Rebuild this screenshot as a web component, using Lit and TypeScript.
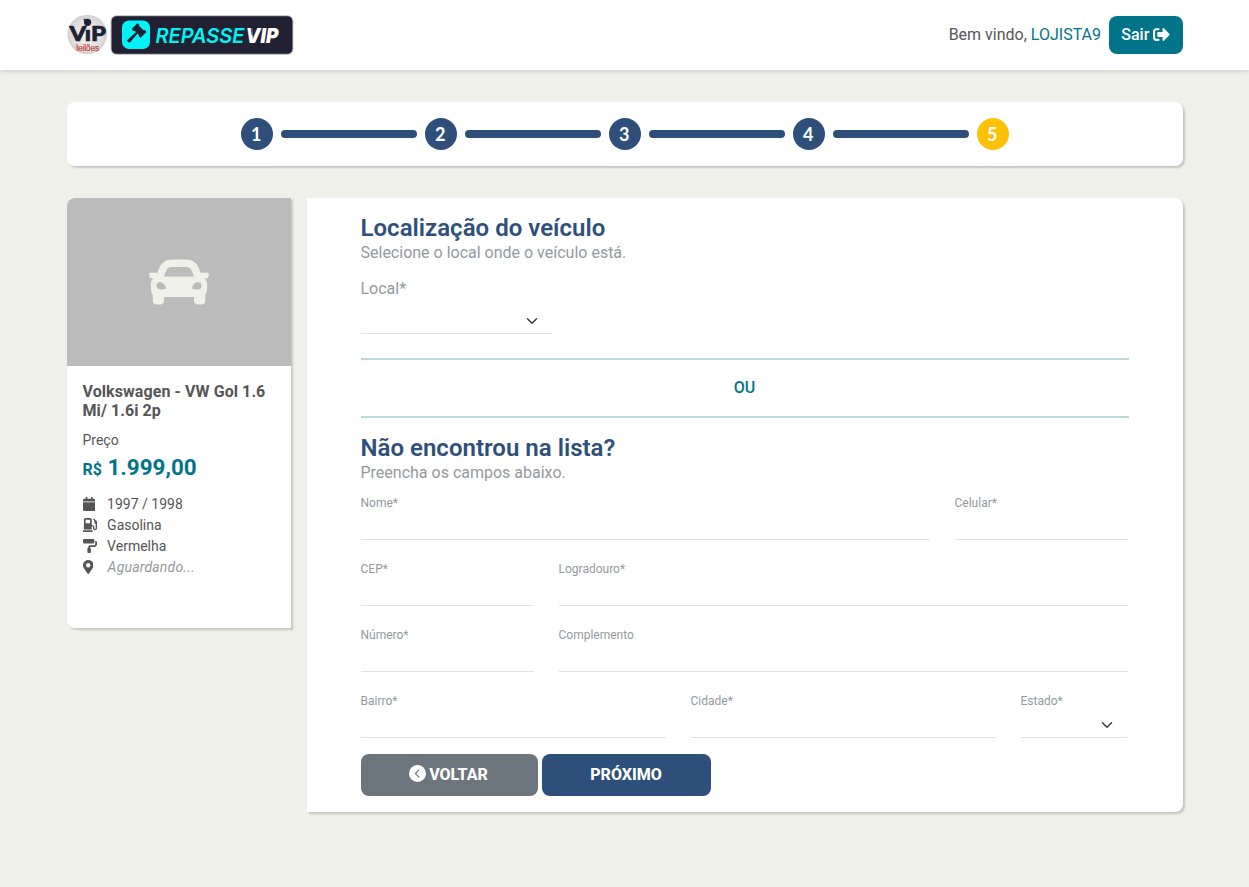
import { LitElement, html, svg, css } from "lit";
import { customElement, property } from "lit/decorators.js";

const ICONS: Record<string, { box: string; d: string }> = {
  car: { box: "0 0 512 512", d: "M499.99 176h-59.87l-16.64-41.6C406.38 91.63 365.57 64 319.5 64h-127c-46.06 0-86.88 27.63-103.99 70.4L71.87 176H12.01C4.2 176-1.53 183.34.37 190.91l6 24C7.7 220.25 12.5 224 18.01 224h20.07C24.65 235.73 16 252.78 16 272v48c0 16.12 6.16 30.67 16 41.93V416c0 17.67 14.33 32 32 32h32c17.67 0 32-14.33 32-32v-32h256v32c0 17.67 14.33 32 32 32h32c17.67 0 32-14.33 32-32v-54.07c9.84-11.25 16-25.8 16-41.93v-48c0-19.22-8.65-36.27-22.07-48H494c5.51 0 10.31-3.75 11.64-9.09l6-24c1.89-7.57-3.84-14.91-11.65-14.91zm-352.06-17.83c7.29-18.22 24.94-30.17 44.57-30.17h127c19.63 0 37.28 11.95 44.57 30.17L384 208H128l19.93-49.83zM96 319.8c-19.2 0-32-12.76-32-31.9S76.8 256 96 256s48 28.71 48 47.85-28.8 15.95-48 15.95zm320 0c-19.2 0-48 3.19-48-15.95S396.8 256 416 256s32 12.76 32 31.9-12.8 31.9-32 31.9z" },
  calendar: { box: "0 0 448 512", d: "M12 192h424c6.6 0 12 5.4 12 12v260c0 26.5-21.5 48-48 48H48c-26.5 0-48-21.5-48-48V204c0-6.6 5.4-12 12-12zm436-44v-36c0-26.5-21.5-48-48-48h-48V12c0-6.6-5.4-12-12-12h-40c-6.6 0-12 5.4-12 12v52H160V12c0-6.6-5.4-12-12-12h-40c-6.6 0-12 5.4-12 12v52H48C21.5 64 0 85.5 0 112v36c0 6.6 5.4 12 12 12h424c6.6 0 12-5.4 12-12z" },
  pump: { box: "0 0 512 512", d: "M336 448H16c-8.8 0-16 7.2-16 16v32c0 8.8 7.2 16 16 16h320c8.8 0 16-7.2 16-16v-32c0-8.8-7.2-16-16-16zm157.2-340.7l-81-81c-6.2-6.2-16.4-6.2-22.6 0l-11.3 11.3c-6.2 6.2-6.2 16.4 0 22.6L416 97.9V160c0 28.1 20.9 51.3 48 55.2V376c0 13.2-10.8 24-24 24s-24-10.8-24-24v-32c0-48.6-39.4-88-88-88h-8V64c0-35.3-28.7-64-64-64H96C60.7 0 32 28.7 32 64v352h288V304h8c22.1 0 40 17.9 40 40v27.8c0 37.7 27 72 64.5 75.9 43 4.3 79.5-29.5 79.5-71.7V152.6c0-17-6.8-33.3-18.8-45.3zM256 192H96V64h160v128z" },
  roller: { box: "0 0 512 512", d: "M416 128V32c0-17.67-14.33-32-32-32H32C14.33 0 0 14.33 0 32v96c0 17.67 14.33 32 32 32h352c17.67 0 32-14.33 32-32zm32-64v128c0 17.67-14.33 32-32 32H256c-35.35 0-64 28.65-64 64v32c-17.67 0-32 14.33-32 32v128c0 17.67 14.33 32 32 32h64c17.67 0 32-14.33 32-32V352c0-17.67-14.33-32-32-32v-32h160c53.02 0 96-42.98 96-96v-64c0-35.35-28.65-64-64-64z" },
  marker: { box: "0 0 384 512", d: "M172.268 501.67C26.97 291.031 0 269.413 0 192 0 85.961 85.961 0 192 0s192 85.961 192 192c0 77.413-26.97 99.031-172.268 309.67-9.535 13.774-29.93 13.773-39.464 0zM192 272c44.183 0 80-35.817 80-80s-35.817-80-80-80-80 35.817-80 80 35.817 80 80 80z" },
  signout: { box: "0 0 512 512", d: "M497 273L329 441c-15 15-41 4.5-41-17v-96H152c-13.3 0-24-10.7-24-24v-96c0-13.3 10.7-24 24-24h136V88c0-21.4 25.9-32 41-17l168 168c9.3 9.4 9.3 24.6 0 34zM192 436v-40c0-6.6-5.4-12-12-12H96c-17.7 0-32-14.3-32-32V160c0-17.7 14.3-32 32-32h84c6.6 0 12-5.4 12-12V76c0-6.6-5.4-12-12-12H96c-53 0-96 43-96 96v192c0 53 43 96 96 96h84c6.6 0 12-5.4 12-12z" },
};

const icon = (name: string) => {
  const i = ICONS[name];
  return html`<svg class="icon ${name}" viewBox=${i.box}>${svg`<path fill="currentColor" d=${i.d}></path>`}</svg>`;
};

@customElement("form-field")
class FormField extends LitElement {
  @property() label = "";
  @property({ type: Boolean }) select = false;
  @property({ type: Boolean }) large = false;

  static styles = css`
    :host { display: block; }
    .label { height: 18px; font-size: 12px; line-height: 18px; color: #939a9e; }
    .control {
      height: 28px; box-sizing: border-box; border-bottom: 1px solid #dee2e6; border-radius: 6px 6px 0 0;
      display: flex; justify-content: flex-end; align-items: center; padding-right: 12px;
    }
    .large .label { height: 24px; font-size: 16px; line-height: 24px; }
    .large .control { height: 33px; padding-top: 9px; }
    .small .control { padding-top: 3px; }
    .chevron { width: 16px; height: 12px; }
  `;

  render() {
    return html`<div class=${this.large ? "large" : "small"}>
      <div class="label">${this.label}</div>
      <div class="control">
        ${this.select
          ? html`<svg class="chevron" viewBox="0 0 16 16"><path fill="none" stroke="#343a40" stroke-linecap="round" stroke-linejoin="round" stroke-width="2" d="m2 5 6 6 6-6"/></svg>`
          : ""}
      </div>
    </div>`;
  }
}

@customElement("app-root")
class AppRoot extends LitElement {
  static styles = css`
    :host {
      display: block; box-sizing: border-box; min-height: 887px; background: #eff0e9;
      font-family: Roboto, sans-serif; font-size: 16px; line-height: 24px; color: #555;
    }
    .container { width: 1116px; margin: 0 auto; }
    .top { height: 70px; background: #fff; box-shadow: 0 1px 5px rgba(0, 0, 0, 0.16); }
    .bar { height: 70px; display: flex; align-items: center; }
    .vip { width: 42px; height: 42px; display: block; }
    .repasse { width: 184px; height: 40px; display: block; margin-left: 1.5px; }
    .welcome { margin-left: auto; margin-right: 7.5px; }
    .teal { color: #007589; }
    .exit {
      box-sizing: border-box; width: 74px; height: 38px; border-radius: 8px; background: #007589; color: #fff;
      display: flex; align-items: center; padding-left: 12.8px; font-weight: 500; gap: 3.6px;
    }
    .signout { width: 17px; height: 17px; margin-top: -1px; }
    .card { background: #fff; box-shadow: 2px 2px 2px rgba(0, 0, 0, 0.17); }
    .steps {
      margin-top: 32px; height: 64px; border-radius: 8px;
      display: flex; align-items: center; justify-content: center; gap: 8px;
    }
    .step {
      width: 32px; height: 32px; border-radius: 50%; background: #2d4f7a; color: #fff;
      font: 700 18px/32px Lato, sans-serif; text-align: center; text-indent: -0.6px;
    }
    .step.current { background: #ffc107; }
    .line { width: 136px; height: 8px; border-radius: 4px; background: #2d4f7a; }
    .content { margin-top: 32px; display: flex; align-items: flex-start; gap: 15.7px; }
    .vehicle { width: 224.4px; height: 430px; border-radius: 8px 0 0 8px; overflow: hidden; }
    .photo {
      height: 168px; background: #bbb; color: #eff0e9;
      display: flex; align-items: center; justify-content: center;
    }
    .car { width: 60px; height: 60px; }
    .info { padding: 16px; }
    .name { font-weight: 700; line-height: 19.2px; letter-spacing: 0.08px; }
    .pricelabel { font-size: 14px; line-height: 21px; margin-top: 10px; }
    .price { font-weight: 700; font-size: 22.4px; line-height: 27px; margin-top: 3px; }
    .currency { font-size: 16px; }
    .specs { margin-top: 11px; font-size: 14px; line-height: 21px; }
    .spec { display: flex; align-items: center; height: 21px; }
    .slot { width: 24.6px; display: flex; margin-top: -1px; }
    .slot .icon { height: 14px; }
    .waiting { font-style: italic; color: #939a9e; letter-spacing: 0.2px; padding-left: 0.5px; }
    .main { flex: 1; box-sizing: border-box; height: 614px; padding: 16px 54px; border-radius: 0 8px 8px 0; }
    h2 { margin: 0; font-size: 24px; line-height: 28.8px; font-weight: 600; color: #2d4f7a; letter-spacing: 0.02px; }
    p { margin: 0; line-height: 20px; color: #939a9e; }
    .local { width: 191.4px; margin-top: 14px; }
    .or {
      margin: 24px 0 16px; height: 60px; box-sizing: border-box; border: solid #b9dade; border-width: 2px 0;
      display: flex; align-items: center; justify-content: center; font-weight: 500;
    }
    .fields { margin-top: 11px; display: grid; grid-template-columns: repeat(12, 42px); column-gap: 24px; row-gap: 20px; }
    .w2 { grid-column: span 2; margin-right: 1.4px; }
    .w3 { grid-column: span 3; margin-right: 0.4px; }
    .w5 { grid-column: span 5; margin-right: 0.4px; }
    .w9 { grid-column: span 9; margin-right: 0.4px; }
    .actions { margin-top: 16px; display: flex; gap: 4px; }
    .button {
      height: 42px; border-radius: 8px; color: #fff; font-weight: 800; line-height: 24px;
      display: flex; align-items: center; justify-content: center;
    }
    .back { width: 177px; background: #6c757d; gap: 3px; }
    .next { width: 169px; background: #2d4f7a; }
    .circle { width: 17px; height: 17px; margin: -2px 0 0 -1px; }
  `;

  render() {
    return html`
      <header class="top">
        <div class="container bar">
          <svg class="vip" viewBox="0 0 42 42">
            <defs>
              <radialGradient id="disc"><stop offset="0" stop-color="#f6f3f2"/><stop offset=".7" stop-color="#e4e0df"/><stop offset="1" stop-color="#d3d0cf"/></radialGradient>
            </defs>
            <circle cx="20.2" cy="20.5" r="19.8" fill="url(#disc)"/>
            <circle cx="20.6" cy="8.3" r="3.6" fill="#1d2336"/>
            <path d="M16.8 5.2l2.4 2" stroke="#1d2336" stroke-width="1.6"/>
            <text x="2.4" y="27" font-family="Lato" font-weight="900" font-size="20.5" textLength="36.5" lengthAdjust="spacingAndGlyphs" fill="#1d2336" stroke="#1d2336" stroke-width=".7">VıP</text>
            <text x="9.2" y="37" font-family="Liberation Sans" font-size="8.5" textLength="23" lengthAdjust="spacing" fill="#c8454c" stroke="#c8454c" stroke-width=".2">leilões</text>
          </svg>
          <svg class="repasse" viewBox="0 0 184 40">
            <rect x="1" y=".7" width="182" height="38.6" rx="5.5" fill="#222033" stroke="#c8c8cc"/>
            <rect x="12" y="5.5" width="28" height="28.5" rx="7" fill="#00f3f5"/>
            <g transform="translate(29 15.5) rotate(-46)" fill="#222033">
              <path d="M-15.6-1.2q0-.6.6-.6L-3-1.1V1.1L-15 1.8q-.6 0-.6-.6z"/>
              <rect x="-4.3" y="-6.3" width="8.6" height="3" rx=".9"/>
              <rect x="-4.3" y="3.3" width="8.6" height="3" rx=".9"/>
              <rect x="-3.3" y="-4" width="6.6" height="8"/>
            </g>
            <text x="45.5" y="28" font-family="Inter" font-style="italic" font-weight="600" font-size="20.5" textLength="89" lengthAdjust="spacingAndGlyphs" fill="#00f3f5">REPASSE</text>
            <text x="135.5" y="28" font-family="Inter" font-style="italic" font-weight="900" font-size="20.5" textLength="33" lengthAdjust="spacingAndGlyphs" fill="#fff">VIP</text>
            <path d="M141 12.5l1.2 8" stroke="#222033" stroke-width=".8"/>
          </svg>
          <div class="welcome">Bem vindo, <span class="teal">LOJISTA9</span></div>
          <div class="exit"><span>Sair</span>${icon("signout")}</div>
        </div>
      </header>

      <div class="container">
        <div class="card steps">
          ${[1, 2, 3, 4, 5].map((n) => html`
            ${n > 1 ? html`<div class="line"></div>` : ""}
            <div class="step ${n === 5 ? "current" : ""}">${n}</div>`)}
        </div>

        <div class="content">
          <aside class="card vehicle">
            <div class="photo">${icon("car")}</div>
            <div class="info">
              <div class="name">Volkswagen - VW Gol 1.6 Mi/ 1.6i 2p</div>
              <div class="pricelabel">Preço</div>
              <div class="price teal"><span class="currency">R$</span> 1.999,00</div>
              <div class="specs">
                <div class="spec"><span class="slot">${icon("calendar")}</span>1997 / 1998</div>
                <div class="spec"><span class="slot">${icon("pump")}</span>Gasolina</div>
                <div class="spec"><span class="slot">${icon("roller")}</span>Vermelha</div>
                <div class="spec"><span class="slot">${icon("marker")}</span><span class="waiting">Aguardando...</span></div>
              </div>
            </div>
          </aside>

          <main class="card main">
            <h2>Localização do veículo</h2>
            <p>Selecione o local onde o veículo está.</p>
            <form-field class="local" label="Local*" select large></form-field>
            <div class="or teal">OU</div>
            <h2>Não encontrou na lista?</h2>
            <p>Preencha os campos abaixo.</p>
            <div class="fields">
              <form-field class="w9" label="Nome*"></form-field>
              <form-field class="w3" label="Celular*"></form-field>
              <form-field class="w3" label="CEP*"></form-field>
              <form-field class="w9" label="Logradouro*"></form-field>
              <form-field class="w3" label="Número*"></form-field>
              <form-field class="w9" label="Complemento"></form-field>
              <form-field class="w5" label="Bairro*"></form-field>
              <form-field class="w5" label="Cidade*"></form-field>
              <form-field class="w2" label="Estado*" select></form-field>
            </div>
            <div class="actions">
              <div class="button back">
                <svg class="circle" viewBox="0 0 16 16"><circle cx="8" cy="8" r="8" fill="#fff"/><path d="M9.6 4.4 6 8l3.6 3.6" fill="none" stroke="#6c757d" stroke-width="1.1"/></svg>
                <span>VOLTAR</span>
              </div>
              <div class="button next">PRÓXIMO</div>
            </div>
          </main>
        </div>
      </div>
    `;
  }
}
